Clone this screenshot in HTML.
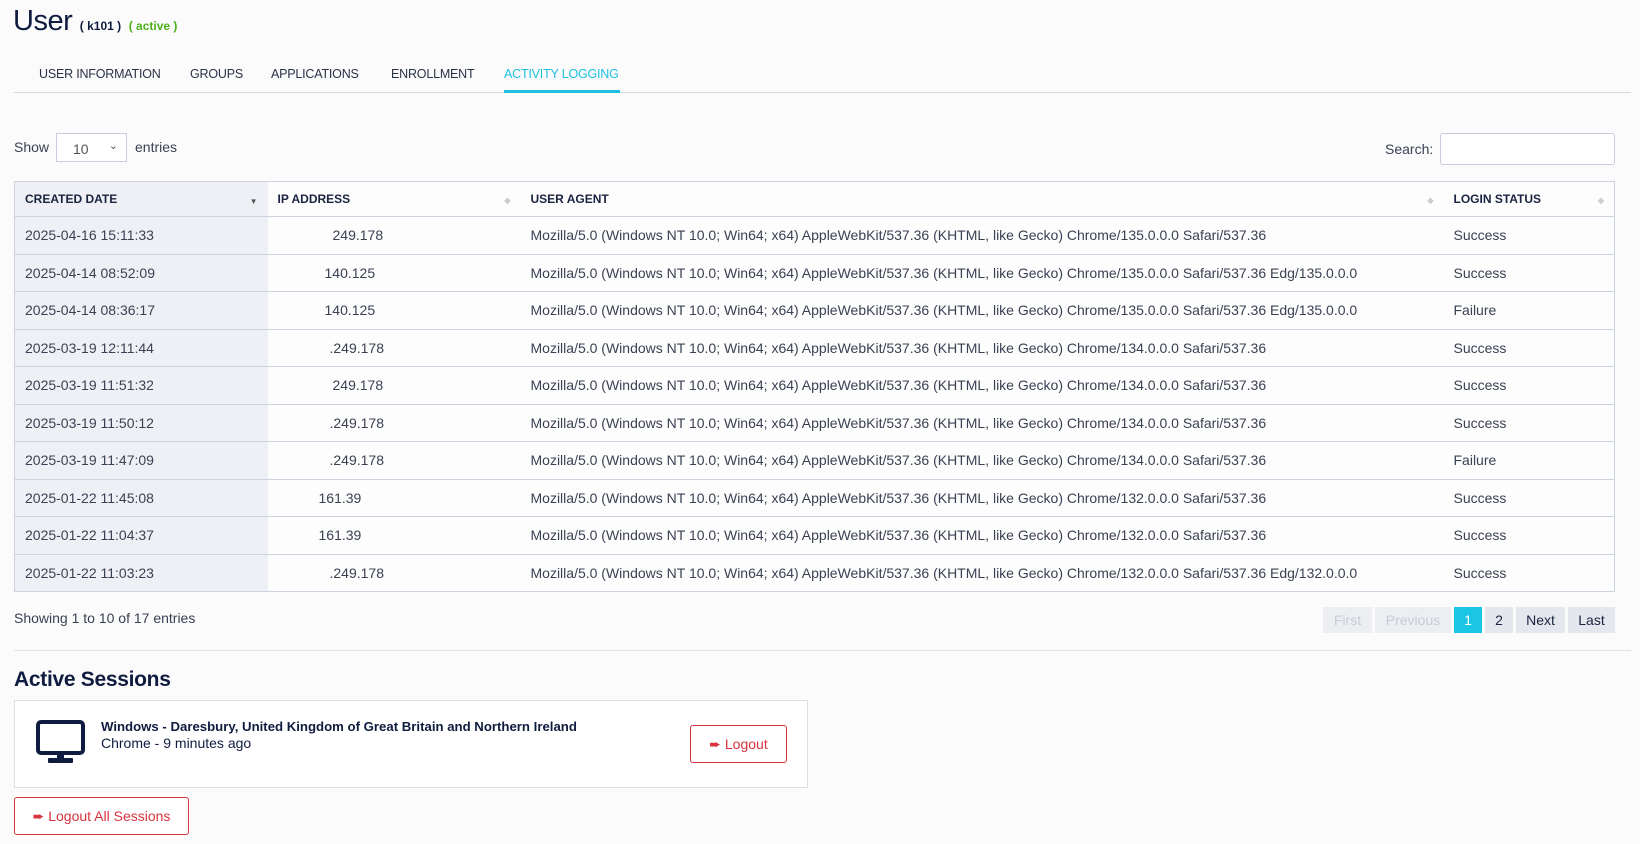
<!DOCTYPE html>
<html><head><meta charset="utf-8"><style>
*{box-sizing:border-box;margin:0;padding:0}
body{width:1640px;height:844px;background:#fbfbfc;font-family:"Liberation Sans",sans-serif;color:#3a4152;position:relative;overflow:hidden;font-size:14px}
.a{position:absolute;white-space:nowrap}
h1{position:absolute;left:13px;top:5px;font-size:29px;font-weight:normal;color:#0f1c3f;letter-spacing:-0.5px}
h1 small{font-size:12px;font-weight:bold;color:#0f1c3f;letter-spacing:0}
h1 .g{color:#4caf1a}
.tab{position:absolute;top:67px;font-size:12.5px;color:#2a3247;letter-spacing:-0.2px}
.tabline{position:absolute;left:14px;top:92px;width:1617px;height:1px;background:#d3d7e2}
table{position:absolute;left:14px;top:181px;width:1601px;border-collapse:collapse;border:1px solid #cdd2df;background:#fdfdfd}
th{height:35px;text-align:left;font-size:12px;color:#1a2340;padding-left:10px;position:relative;border-bottom:1px solid #cdd2df}
td{height:37.5px;padding-left:10px;border-bottom:1px solid #cdd2df;font-size:14px;color:#3a4152}
td:first-child,th:first-child{background:#eef0f5}
.s{position:absolute;right:10px;top:14px;font-size:8px;color:#ccc}
.btn{position:absolute;top:607px;height:26px;font-size:14px;line-height:26px;text-align:center;background:#e4e7ee;color:#1a2340}
.red{position:absolute;border:1px solid #d9333f;border-radius:3px;color:#d9333f;font-size:14px;text-align:center;background:#fff}
</style></head><body>
<h1>User <small>( k101 )</small> <small class="g">( active )</small></h1>
<div class="tab" style="left:39px">USER INFORMATION</div>
<div class="tab" style="left:190px">GROUPS</div>
<div class="tab" style="left:271px">APPLICATIONS</div>
<div class="tab" style="left:391px">ENROLLMENT</div>
<div class="tab" style="left:504px;color:#1ec0e0">ACTIVITY LOGGING</div>
<div class="tabline"></div>
<div class="a" style="left:504px;top:90px;width:116px;height:3px;background:#1ec0e0"></div>

<div class="a" style="left:14px;top:139px">Show</div>
<div class="a" style="left:56px;top:133px;width:71px;height:29px;border:1px solid #ccd;background:#fff;font-size:14px;padding:7px 0 0 16px;color:#555">10<span style="position:absolute;right:8px;top:5px;font-size:11px">&#8964;</span></div>
<div class="a" style="left:135px;top:139px">entries</div>
<div class="a" style="left:1385px;top:141px">Search:</div>
<div class="a" style="left:1440px;top:133px;width:175px;height:32px;border:1px solid #ccd;border-radius:3px;background:#fff"></div>

<table>
<tr><th style="width:253px">CREATED DATE<span class="s" style="color:#555;top:15px">▼</span></th><th style="width:253px;background:#fdfdfd">IP ADDRESS<span class="s">◆</span></th><th style="width:923px">USER AGENT<span class="s">◆</span></th><th>LOGIN STATUS<span class="s">◆</span></th></tr>
<tr><td>2025-04-16 15:11:33</td><td style="padding-left:65px">249.178</td><td>Mozilla/5.0 (Windows NT 10.0; Win64; x64) AppleWebKit/537.36 (KHTML, like Gecko) Chrome/135.0.0.0 Safari/537.36</td><td>Success</td></tr>
<tr><td>2025-04-14 08:52:09</td><td style="padding-left:57px">140.125</td><td>Mozilla/5.0 (Windows NT 10.0; Win64; x64) AppleWebKit/537.36 (KHTML, like Gecko) Chrome/135.0.0.0 Safari/537.36 Edg/135.0.0.0</td><td>Success</td></tr>
<tr><td>2025-04-14 08:36:17</td><td style="padding-left:57px">140.125</td><td>Mozilla/5.0 (Windows NT 10.0; Win64; x64) AppleWebKit/537.36 (KHTML, like Gecko) Chrome/135.0.0.0 Safari/537.36 Edg/135.0.0.0</td><td>Failure</td></tr>
<tr><td>2025-03-19 12:11:44</td><td style="padding-left:62px">.249.178</td><td>Mozilla/5.0 (Windows NT 10.0; Win64; x64) AppleWebKit/537.36 (KHTML, like Gecko) Chrome/134.0.0.0 Safari/537.36</td><td>Success</td></tr>
<tr><td>2025-03-19 11:51:32</td><td style="padding-left:65px">249.178</td><td>Mozilla/5.0 (Windows NT 10.0; Win64; x64) AppleWebKit/537.36 (KHTML, like Gecko) Chrome/134.0.0.0 Safari/537.36</td><td>Success</td></tr>
<tr><td>2025-03-19 11:50:12</td><td style="padding-left:62px">.249.178</td><td>Mozilla/5.0 (Windows NT 10.0; Win64; x64) AppleWebKit/537.36 (KHTML, like Gecko) Chrome/134.0.0.0 Safari/537.36</td><td>Success</td></tr>
<tr><td>2025-03-19 11:47:09</td><td style="padding-left:62px">.249.178</td><td>Mozilla/5.0 (Windows NT 10.0; Win64; x64) AppleWebKit/537.36 (KHTML, like Gecko) Chrome/134.0.0.0 Safari/537.36</td><td>Failure</td></tr>
<tr><td>2025-01-22 11:45:08</td><td style="padding-left:51px">161.39</td><td>Mozilla/5.0 (Windows NT 10.0; Win64; x64) AppleWebKit/537.36 (KHTML, like Gecko) Chrome/132.0.0.0 Safari/537.36</td><td>Success</td></tr>
<tr><td>2025-01-22 11:04:37</td><td style="padding-left:51px">161.39</td><td>Mozilla/5.0 (Windows NT 10.0; Win64; x64) AppleWebKit/537.36 (KHTML, like Gecko) Chrome/132.0.0.0 Safari/537.36</td><td>Success</td></tr>
<tr><td>2025-01-22 11:03:23</td><td style="padding-left:62px">.249.178</td><td>Mozilla/5.0 (Windows NT 10.0; Win64; x64) AppleWebKit/537.36 (KHTML, like Gecko) Chrome/132.0.0.0 Safari/537.36 Edg/132.0.0.0</td><td>Success</td></tr>
</table>

<div class="a" style="left:14px;top:610px">Showing 1 to 10 of 17 entries</div>
<div class="btn" style="left:1323px;width:49px;color:#c8ccd6;background:#eceef2">First</div>
<div class="btn" style="left:1375px;width:76px;color:#c8ccd6;background:#eceef2">Previous</div>
<div class="btn" style="left:1454px;width:28px;background:#1ac6e4;color:#fff">1</div>
<div class="btn" style="left:1485px;width:28px">2</div>
<div class="btn" style="left:1516px;width:49px">Next</div>
<div class="btn" style="left:1568px;width:47px">Last</div>
<div class="a" style="left:14px;top:650px;width:1617px;height:1px;background:#dfe2e8"></div>

<div class="a" style="left:14px;top:668px;font-size:21px;color:#0f1c3f;font-weight:bold;letter-spacing:-0.3px">Active Sessions</div>
<div class="a" style="left:14px;top:700px;width:794px;height:88px;border:1px solid #dcdfe4;background:#fff"></div>
<svg class="a" style="left:36px;top:720px" width="49" height="44" viewBox="0 0 49 44"><rect x="2" y="2" width="45" height="31" rx="3" fill="none" stroke="#0f1c3f" stroke-width="4"/><rect x="21" y="33" width="7" height="6" fill="#0f1c3f"/><rect x="12" y="38" width="25" height="5" rx="1" fill="#0f1c3f"/></svg>
<div class="a" style="left:101px;top:719px;font-weight:bold;font-size:13.2px;color:#0f1c3f">Windows - Daresbury, United Kingdom of Great Britain and Northern Ireland</div>
<div class="a" style="left:101px;top:735px;font-size:14px;color:#0f1c3f">Chrome - 9 minutes ago</div>
<div class="red" style="left:690px;top:725px;width:97px;height:38px;line-height:36px">&#10152; Logout</div>
<div class="red" style="left:14px;top:797px;width:175px;height:38px;line-height:36px">&#10152; Logout All Sessions</div>
</body></html>
